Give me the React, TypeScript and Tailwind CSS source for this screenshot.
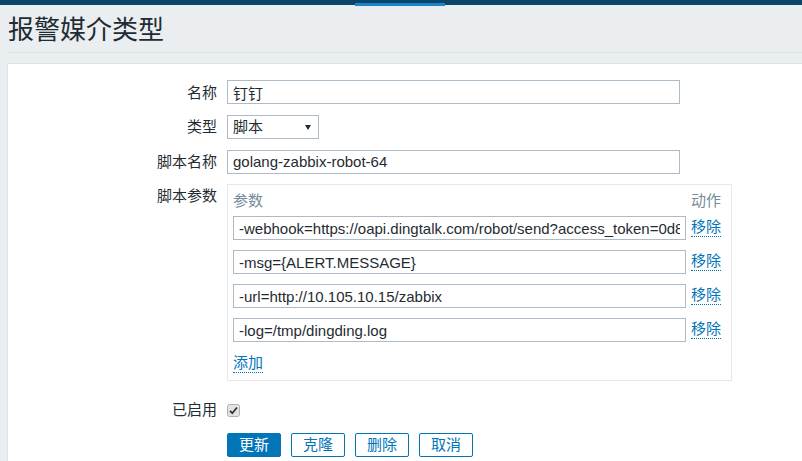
import React from "react";

const FONT = { fontFamily: '"Liberation Sans", Arial, "Noto Sans CJK SC", sans-serif' };

function TextInput({ value, w = "w-[453px]" }: { value: string; w?: string }) {
  return (
    <input
      readOnly
      value={value}
      className={`${w} h-[24px] border border-[#acbbc7] bg-white px-[5px] text-[15px] text-[#1f2c33] outline-none`}
    />
  );
}

function Link({ children }: { children: React.ReactNode }) {
  return (
    <span className="inline-block leading-[18px] text-[15px] text-[#0275b8] border-b border-dotted border-[#0275b8]">
      {children}
    </span>
  );
}

function Row({ label, children, top = "mt-0", align = "items-center" }: { label: string; children: React.ReactNode; top?: string; align?: string }) {
  return (
    <div className={`flex ${align} ${top}`}>
      <div className="w-[209px] text-right text-[15px] leading-[24px] text-[#1f2c33] shrink-0">{label}</div>
      <div className="ml-[10px]">{children}</div>
    </div>
  );
}

export default function App() {
  const params = [
    "-webhook=https://oapi.dingtalk.com/robot/send?access_token=0d8e5f1a2b3c4d",
    "-msg={ALERT.MESSAGE}",
    "-url=http://10.105.10.15/zabbix",
    "-log=/tmp/dingding.log",
  ];
  return (
    <div style={FONT} className="w-[802px] h-[461px] overflow-hidden bg-[#ebeef0] flex flex-col">
      <div className="relative h-[5px] bg-[#0a466a] shrink-0">
        <div className="absolute left-[355px] top-[3px] w-[90px] h-[3px] bg-[#1b85c6]" />
      </div>
      <div className="ml-[7px] h-[48px] shrink-0 flex items-center border-b border-[#dde2e5]">
        <h1 className="text-[26px] leading-[30px] text-[#1f2c33] font-normal pl-[1px] mt-[2px]">报警媒介类型</h1>
      </div>
      <div className="ml-[7px] mt-[10px] flex-1 bg-white border-t border-l border-[#dde2e5] pt-[16px]">
        <Row label="名称">
          <TextInput value="钉钉" />
        </Row>
        <Row label="类型" top="mt-[9px]">
          <div className="relative w-[92px] h-[24px] border border-[#acbbc7] bg-white pl-[5px] text-[15px] leading-[22px] text-[#1f2c33]">
            脚本
            <svg className="absolute right-[7px] top-[9px]" width="6" height="5" viewBox="0 0 6 5">
              <path d="M0 0 L6 0 L3 5 Z" fill="#1f2c33" />
            </svg>
          </div>
        </Row>
        <Row label="脚本名称" top="mt-[11px]">
          <TextInput value="golang-zabbix-robot-64" />
        </Row>
        <Row label="脚本参数" top="mt-[10px]" align="items-start">
          <div className="w-[505px] border border-[#e6e9eb] pl-[5px] pr-[10px] pt-[5px] pb-[7px]">
            <div className="flex h-[22px] items-center text-[15px] text-[#768d99]">
              <div className="w-[453px]">参数</div>
              <div className="ml-[5px]">动作</div>
            </div>
            <div className="mt-[4px] flex flex-col gap-[10px]">
              {params.map((p) => (
                <div key={p} className="flex h-[24px]">
                  <TextInput value={p} />
                  <div className="ml-[5px] self-end mb-[1px]">
                    <Link>移除</Link>
                  </div>
                </div>
              ))}
            </div>
            <div className="mt-[9px] h-[22px]">
              <Link>添加</Link>
            </div>
          </div>
        </Row>
        <Row label="已启用" top="mt-[17px]">
          <svg width="13" height="13" viewBox="0 0 13 13" className="block">
            <rect x="0.5" y="0.5" width="12" height="12" rx="2" fill="#e3e3e3" stroke="#b0b0b0" />
            <path d="M3 6.8 L5.3 9.2 L10 3.5" stroke="#333" strokeWidth="1.8" fill="none" />
          </svg>
        </Row>
        <div className="flex mt-[11px] ml-[219px] gap-[10px]">
          <button className="w-[54px] h-[24px] rounded-[2px] bg-[#0275b8] border border-[#0275b8] text-white text-[15px] leading-[22px]">更新</button>
          {["克隆", "删除", "取消"].map((t) => (
            <button key={t} className="w-[54px] h-[24px] rounded-[2px] bg-white border border-[#0275b8] text-[#0275b8] text-[15px] leading-[22px]">
              {t}
            </button>
          ))}
        </div>
      </div>
    </div>
  );
}
